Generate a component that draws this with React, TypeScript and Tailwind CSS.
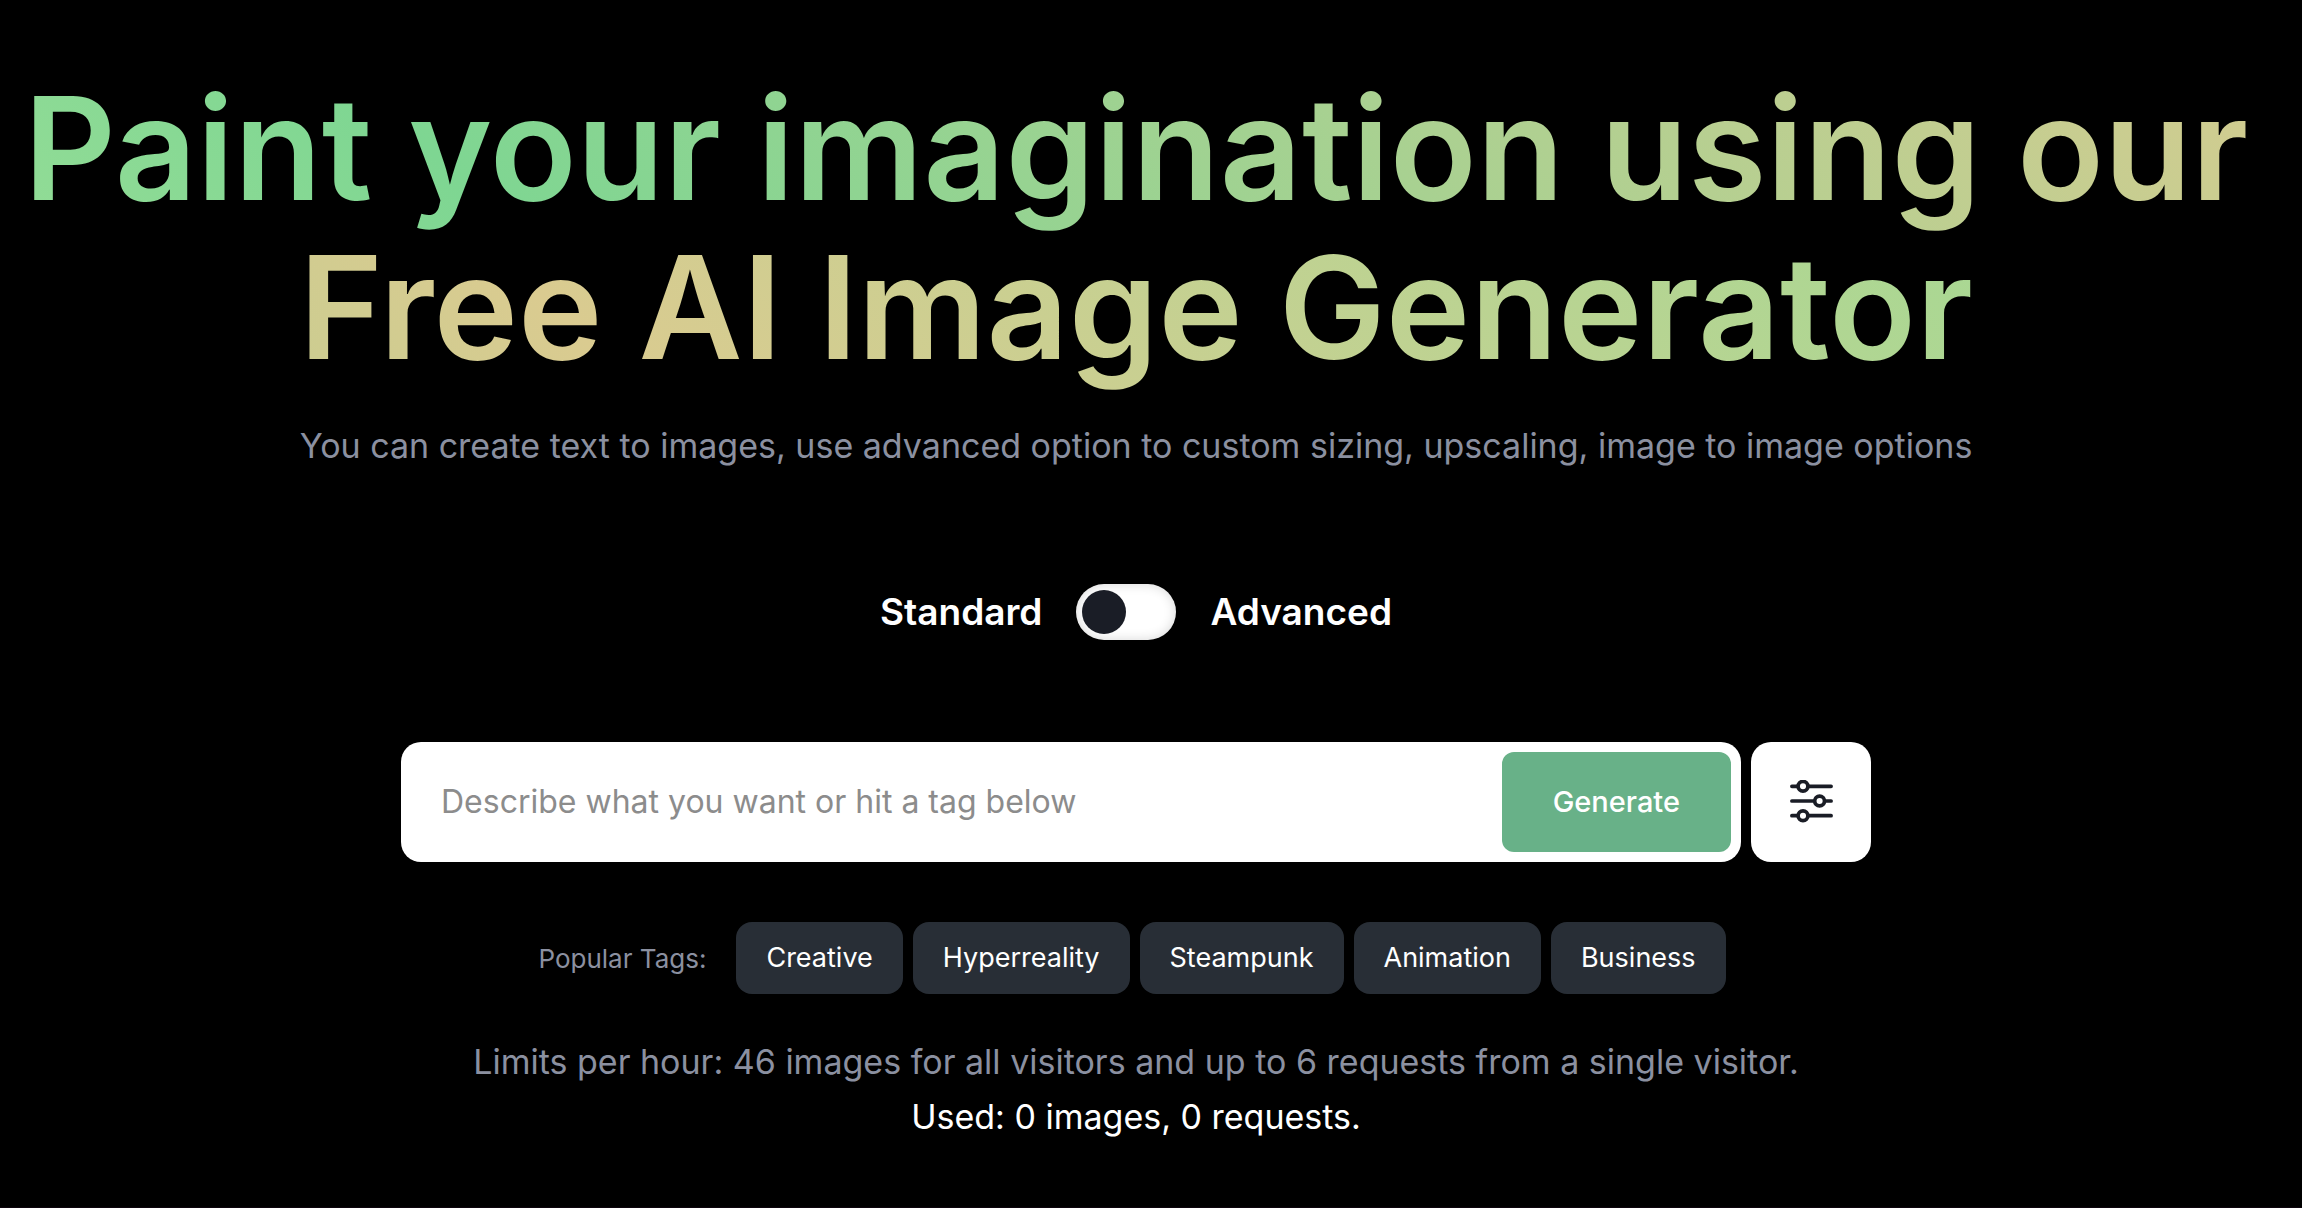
import { useState } from "react";

const TAGS = ["Creative", "Hyperreality", "Steampunk", "Animation", "Business"];

function SlidersIcon() {
  return (
    <svg
      viewBox="0 0 44 44"
      className="size-11"
      fill="none"
      stroke="#1a1d26"
      strokeWidth="3.7"
      strokeLinecap="round"
      aria-hidden="true"
    >
      <path d="M2.9 6.3h39.2M2.9 21h39.2M2.9 35.7h39.2" />
      <circle cx="14" cy="6.3" r="4.9" fill="#fff" />
      <circle cx="30.6" cy="21" r="4.9" fill="#fff" />
      <circle cx="14" cy="35.7" r="4.9" fill="#fff" />
    </svg>
  );
}

export default function App() {
  const [prompt, setPrompt] = useState("");
  const [advanced, setAdvanced] = useState(false);

  return (
    <main className="flex min-h-screen w-full flex-col items-center border-b border-[#0d050d] bg-black pt-[68px] pr-[30px] font-['Inter',sans-serif]">
      {/* Heading */}
      <h1 className="text-center text-[143px] leading-[159px] font-semibold">
        <span className="bg-[linear-gradient(45deg,#92dc96_0%,#7ed692_12%,#dacb90_63%,#a8d893_100%)] bg-clip-text text-transparent">
          Paint your imagination using our <br />
          Free AI Image Generator
        </span>
      </h1>
      <p className="mt-8 text-center text-[34px] leading-14 text-[#8b90a0]">
        You can create text to images, use advanced option to custom sizing, upscaling, image to image options
      </p>

      {/* Mode switch */}
      <div className="mt-[110px] flex items-center gap-[34px] text-[37px] leading-14 font-semibold text-white">
        <label htmlFor="mode">Standard</label>
        <input
          id="mode"
          type="checkbox"
          role="switch"
          checked={advanced}
          onChange={(e) => setAdvanced(e.target.checked)}
          className="flex h-14 w-[100px] cursor-pointer appearance-none items-center rounded-full bg-white px-1.5 shadow-[inset_0_0_12px_rgba(0,0,0,0.16)] before:size-11 before:rounded-full before:bg-[#1a1d26] before:transition-transform checked:before:translate-x-11"
        />
        <label htmlFor="mode">Advanced</label>
      </div>

      {/* Prompt */}
      <form
        onSubmit={(e) => e.preventDefault()}
        className="mt-[102px] flex w-full max-w-[1470px] gap-2.5"
      >
        <div className="flex h-[120px] min-w-0 flex-1 rounded-[20px] bg-white p-2.5 pl-10">
          <input
            type="text"
            aria-label="Prompt"
            value={prompt}
            onChange={(e) => setPrompt(e.target.value)}
            placeholder="Describe what you want or hit a tag below"
            className="min-w-0 flex-1 bg-transparent text-[32px] text-[#1a1d26] outline-none placeholder:text-[#8c8c8c]"
          />
          <button
            type="submit"
            className="rounded-xl bg-[#68b188] px-[51px] text-[29px] font-medium text-white"
          >
            Generate
          </button>
        </div>
        <button
          type="button"
          aria-label="Options"
          className="flex size-[120px] items-center justify-center rounded-[20px] bg-white"
        >
          <SlidersIcon />
        </button>
      </form>

      {/* Tags */}
      <div className="mt-[60px] flex flex-wrap items-center justify-center gap-2.5 pr-2 text-[27px]">
        <span className="mr-5 text-[26px] text-[#8b90a0]">Popular Tags:</span>
        {TAGS.map((tag) => (
          <button
            key={tag}
            type="button"
            onClick={() => setPrompt(tag)}
            className="h-[72px] rounded-2xl bg-[#282e36] px-[30px] text-white"
          >
            {tag}
          </button>
        ))}
      </div>

      {/* Limits */}
      <div className="mt-10 text-center text-[34px] leading-[55px] text-[#8b90a0]">
        <p>Limits per hour: 46 images for all visitors and up to 6 requests from a single visitor.</p>
        <p className="text-white">Used: 0 images, 0 requests.</p>
      </div>
    </main>
  );
}
